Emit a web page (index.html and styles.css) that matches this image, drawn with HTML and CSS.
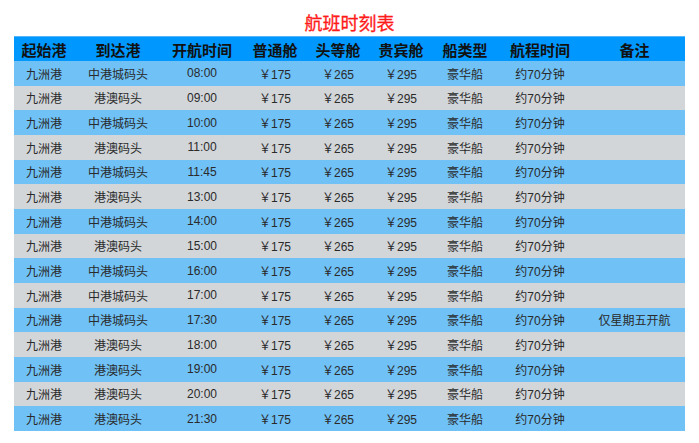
FILE: index.html
```html
<!DOCTYPE html>
<html lang="zh">
<head>
<meta charset="utf-8">
<title>航班时刻表</title>
<link rel="stylesheet" href="styles.css">
</head>
<body>
<div class="page">
  <h1 class="title">航班时刻表</h1>
  <table class="schedule">
    <colgroup>
      <col class="c1"><col class="c2"><col class="c3"><col class="c4"><col class="c5"><col class="c6"><col class="c7"><col class="c8"><col class="c9">
    </colgroup>
    <thead>
      <tr><th>起始港</th><th>到达港</th><th>开航时间</th><th>普通舱</th><th>头等舱</th><th>贵宾舱</th><th>船类型</th><th>航程时间</th><th>备注</th></tr>
    </thead>
    <tbody>
      <tr class="blue"><td>九洲港</td><td>中港城码头</td><td>08:00</td><td>￥175</td><td>￥265</td><td>￥295</td><td>豪华船</td><td>约70分钟</td><td></td></tr>
      <tr class="gray"><td>九洲港</td><td>港澳码头</td><td>09:00</td><td>￥175</td><td>￥265</td><td>￥295</td><td>豪华船</td><td>约70分钟</td><td></td></tr>
      <tr class="blue"><td>九洲港</td><td>中港城码头</td><td>10:00</td><td>￥175</td><td>￥265</td><td>￥295</td><td>豪华船</td><td>约70分钟</td><td></td></tr>
      <tr class="gray"><td>九洲港</td><td>港澳码头</td><td>11:00</td><td>￥175</td><td>￥265</td><td>￥295</td><td>豪华船</td><td>约70分钟</td><td></td></tr>
      <tr class="blue"><td>九洲港</td><td>中港城码头</td><td>11:45</td><td>￥175</td><td>￥265</td><td>￥295</td><td>豪华船</td><td>约70分钟</td><td></td></tr>
      <tr class="gray"><td>九洲港</td><td>港澳码头</td><td>13:00</td><td>￥175</td><td>￥265</td><td>￥295</td><td>豪华船</td><td>约70分钟</td><td></td></tr>
      <tr class="blue"><td>九洲港</td><td>中港城码头</td><td>14:00</td><td>￥175</td><td>￥265</td><td>￥295</td><td>豪华船</td><td>约70分钟</td><td></td></tr>
      <tr class="gray"><td>九洲港</td><td>港澳码头</td><td>15:00</td><td>￥175</td><td>￥265</td><td>￥295</td><td>豪华船</td><td>约70分钟</td><td></td></tr>
      <tr class="blue"><td>九洲港</td><td>中港城码头</td><td>16:00</td><td>￥175</td><td>￥265</td><td>￥295</td><td>豪华船</td><td>约70分钟</td><td></td></tr>
      <tr class="gray"><td>九洲港</td><td>中港城码头</td><td>17:00</td><td>￥175</td><td>￥265</td><td>￥295</td><td>豪华船</td><td>约70分钟</td><td></td></tr>
      <tr class="blue"><td>九洲港</td><td>中港城码头</td><td>17:30</td><td>￥175</td><td>￥265</td><td>￥295</td><td>豪华船</td><td>约70分钟</td><td>仅星期五开航</td></tr>
      <tr class="gray"><td>九洲港</td><td>港澳码头</td><td>18:00</td><td>￥175</td><td>￥265</td><td>￥295</td><td>豪华船</td><td>约70分钟</td><td></td></tr>
      <tr class="blue"><td>九洲港</td><td>港澳码头</td><td>19:00</td><td>￥175</td><td>￥265</td><td>￥295</td><td>豪华船</td><td>约70分钟</td><td></td></tr>
      <tr class="gray"><td>九洲港</td><td>港澳码头</td><td>20:00</td><td>￥175</td><td>￥265</td><td>￥295</td><td>豪华船</td><td>约70分钟</td><td></td></tr>
      <tr class="blue"><td>九洲港</td><td>港澳码头</td><td>21:30</td><td>￥175</td><td>￥265</td><td>￥295</td><td>豪华船</td><td>约70分钟</td><td></td></tr>
    </tbody>
  </table>
</div>
</body>
</html>
```

FILE: styles.css
```css
html, body {
  margin: 0;
  padding: 0;
  background: #ffffff;
}

body {
  font-family: "Liberation Sans", "Noto Sans CJK SC", sans-serif;
}

.page {
  width: 671px;
  margin: 0 auto;
  padding-top: 13px;
}

.title {
  margin: 0;
  height: 23px;
  line-height: 23px;
  font-size: 18px;
  font-weight: normal;
  color: #ff1a1a;
  text-align: center;
  -webkit-text-stroke: 0.3px #ff1a1a;
}

.schedule {
  width: 671px;
  border-collapse: collapse;
  table-layout: fixed;
}

.c1 { width: 60px; }
.c2 { width: 88px; }
.c3 { width: 80px; }
.c4 { width: 66px; }
.c5 { width: 60px; }
.c6 { width: 66px; }
.c7 { width: 62px; }
.c8 { width: 88px; }
.c9 { width: 101px; }

.schedule th {
  background: #0097fe;
  border-top: 1px solid #56b6fb;
  height: 24px;
  padding: 0;
  font-size: 15px;
  font-weight: bold;
  color: #111111;
  text-align: center;
}

.schedule td {
  height: 24.67px;
  padding: 0;
  font-size: 12px;
  color: #2a2a2a;
  text-align: center;
  white-space: nowrap;
}

.blue td { background: #6fc1f6; }
.gray td { background: #d3d6d9; }
```
